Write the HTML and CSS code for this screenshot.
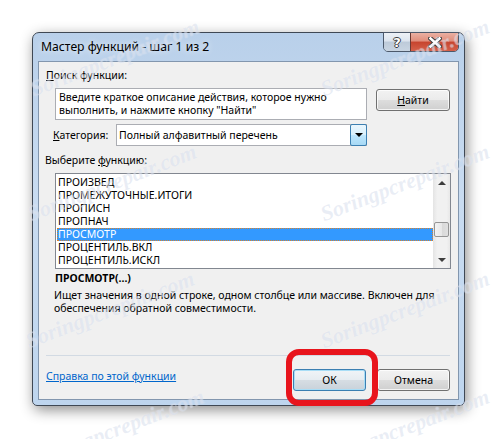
FILE: index.html
```html
<!DOCTYPE html>
<html lang="ru">
<head>
  <meta charset="UTF-8" />
  <title>Мастер функций</title>
  <link rel="stylesheet" href="styles.css">
</head>
<body>

  <div class="window">
    <div class="titlebar">
      <span class="title">Мастер функций - шаг 1 из 2</span>
      <div class="caption-buttons">
        <span class="cap-btn help">?</span>
        <span class="cap-btn close">
          <svg width="14" height="11" viewBox="0 0 14 11">
            <path d="M2.5 1.5 L11.5 9.5 M11.5 1.5 L2.5 9.5" stroke="#3b3b3b" stroke-width="4.6" stroke-linecap="square" fill="none"/>
            <path d="M2.5 1.5 L11.5 9.5 M11.5 1.5 L2.5 9.5" stroke="#fff" stroke-width="2.6" stroke-linecap="square" fill="none"/>
          </svg>
        </span>
      </div>
    </div>

    <div class="client">
      <div class="label"><u>П</u>оиск функции:</div>

      <div class="search-row">
        <div class="search-box">Введите краткое описание действия, которое нужно выполнить, и нажмите кнопку "Найти"</div>
        <button class="btn find"><u>Н</u>айти</button>
      </div>

      <div class="category-row">
        <span class="label"><u>К</u>атегория:</span>
        <div class="combo">
          <span class="combo-text">Полный алфавитный перечень</span>
          <span class="combo-btn"><span class="arrow-down"></span></span>
        </div>
      </div>

      <div class="label pick-label">Выберите <u>ф</u>ункцию:</div>

      <div class="listbox">
        <ul class="items">
          <li>ПРОИЗВЕД</li>
          <li>ПРОМЕЖУТОЧНЫЕ.ИТОГИ</li>
          <li>ПРОПИСН</li>
          <li>ПРОПНАЧ</li>
          <li class="selected">ПРОСМОТР</li>
          <li>ПРОЦЕНТИЛЬ.ВКЛ</li>
          <li>ПРОЦЕНТИЛЬ.ИСКЛ</li>
        </ul>
        <div class="scrollbar">
          <span class="sb-arrow"><span class="tri-up"></span></span>
          <div class="sb-track"><span class="sb-thumb"></span></div>
          <span class="sb-arrow"><span class="tri-down"></span></span>
        </div>
      </div>

      <div class="fn-name">ПРОСМОТР(...)</div>
      <div class="fn-desc">Ищет значения в одной строке, одном столбце или массиве. Включен для обеспечения обратной совместимости.</div>

      <div class="separator"></div>

      <div class="footer">
        <a class="help-link" href="#">Справка по этой функции</a>
        <div class="ok-wrap">
          <button class="btn ok">ОК</button>
          <span class="mark"></span>
        </div>
        <button class="btn">Отмена</button>
      </div>
    </div>
  </div>

  <div class="watermarks">
    <span class="wm" style="left:115px; top:58px">Soringpcrepair.com</span>
    <span class="wm" style="left:405px; top:58px">Soringpcrepair.com</span>
    <span class="wm" style="left:112px; top:183px">Soringpcrepair.com</span>
    <span class="wm" style="left:405px; top:183px">Soringpcrepair.com</span>
    <span class="wm" style="left:110px; top:310px">Soringpcrepair.com</span>
    <span class="wm" style="left:405px; top:310px">Soringpcrepair.com</span>
    <span class="wm" style="left:120px; top:428px">Soringpcrepair.com</span>
    <span class="wm" style="left:405px; top:428px">Soringpcrepair.com</span>
  </div>

</body>
</html>
```

FILE: styles.css
```css
body {
  margin: 0;
  padding: 32px 0 0 32px;
  background: #fff;
  font-family: "Noto Sans", "Open Sans", sans-serif;
  font-size: 10.5px;
  color: #000;
  position: relative;
  height: 439px;
  box-sizing: border-box;
  overflow: hidden;
}

/* window frame */

.window {
  width: 433px;
  height: 374px;
  box-sizing: border-box;
  border: 1px solid #3f4854;
  border-radius: 7px 7px 5px 5px;
  background: linear-gradient(#b9d0ea, #c9dcf1 45%, #bed5ee);
  box-shadow: 2px 4px 14px rgba(0, 0, 0, 0.45);
  display: flex;
  flex-direction: column;
}

.titlebar {
  height: 28px;
  flex: none;
  display: flex;
  justify-content: space-between;
  align-items: flex-start;
  padding: 0 5px 0 8px;
}

.title {
  line-height: 28px;
  font-size: 12.2px;
  text-shadow: 0 0 6px rgba(255, 255, 255, 0.9);
}

.caption-buttons {
  display: flex;
  margin-top: -1px;
  height: 20px;
  box-sizing: border-box;
  border: 1px solid #4c596b;
  border-radius: 0 0 5px 5px;
  overflow: hidden;
}

.cap-btn {
  display: flex;
  align-items: center;
  justify-content: center;
}

.help {
  width: 26px;
  background: linear-gradient(#edf1f6, #dce4ee 45%, #bdcad9 50%, #c9d5e2);
  color: #fff;
  font-family: "DejaVu Sans", sans-serif;
  font-weight: bold;
  font-size: 13px;
  text-shadow: -1px 0 #3b3b3b, 1px 0 #3b3b3b, 0 -1px #3b3b3b, 0 1px #3b3b3b;
}

.close {
  width: 47px;
  border-left: 1px solid #6b3a33;
  background: linear-gradient(#eab0a2, #e08d7b 45%, #c7442e 50%, #d4614a);
}

/* client area */

.client {
  flex: 1;
  margin: 0 5px 5px;
  border: 1px solid #8296ae;
  background: #f0f0f0;
  padding: 6px 8px 0 7px;
  display: flex;
  flex-direction: column;
}

.label {
  line-height: 15px;
}

.search-row {
  display: flex;
  align-items: flex-start;
  margin: 5px 0 0 9px;
}

.search-box {
  width: 312px;
  height: 32px;
  box-sizing: border-box;
  border: 1px solid #abadb3;
  background: #fff;
  padding: 2px 3px 0;
  line-height: 13px;
}

.btn {
  font-family: inherit;
  font-size: 10.5px;
  color: #000;
  height: 22px;
  width: 73px;
  padding: 0;
  border: 1px solid #707070;
  border-radius: 3px;
  background: linear-gradient(#f2f2f2, #ebebeb 48%, #dddddd 52%, #cfcfcf);
  box-shadow: inset 0 0 0 1px rgba(255, 255, 255, 0.75);
}

.find {
  width: 74px;
  margin: 1px 0 0 9px;
}

.category-row {
  display: flex;
  align-items: center;
  width: 314px;
  margin: 4px 0 0 7px;
}

.combo {
  margin-left: auto;
  width: 251px;
  height: 22px;
  box-sizing: border-box;
  border: 1px solid #abadb3;
  background: #fff;
  display: flex;
  align-items: center;
}

.combo-text {
  flex: 1;
  padding-left: 2px;
}

.combo-btn {
  width: 17px;
  height: 22px;
  margin: -1px -1px -1px 0;
  box-sizing: border-box;
  border: 1px solid #3c7fb1;
  border-radius: 2px;
  background: linear-gradient(#eaf6fd, #d9f0fc 48%, #bee6fd 52%, #a7d9f5);
  display: flex;
  align-items: center;
  justify-content: center;
}

.arrow-down {
  border-left: 4px solid transparent;
  border-right: 4px solid transparent;
  border-top: 4px solid #000;
}

.pick-label {
  margin: 7px 0 0 -1px;
}

/* function list */

.listbox {
  display: flex;
  width: 396px;
  height: 96px;
  box-sizing: border-box;
  margin: 5px 0 0 9px;
  border: 1px solid #828790;
  background: #fff;
}

.items {
  flex: 1;
  list-style: none;
  margin: 0;
  padding: 2px 0 0 1px;
  overflow: hidden;
}

.items li {
  line-height: 13px;
  padding-left: 1px;
}

.items li.selected {
  background: #3399ff;
  color: #fff;
  outline: 1px dotted #d9822b;
  outline-offset: -1px;
}

.scrollbar {
  width: 17px;
  display: flex;
  flex-direction: column;
  background: linear-gradient(90deg, #e4e4e4, #f1f1f1 25%, #f1f1f1 80%, #e8e8e8);
}

.sb-arrow {
  height: 17px;
  display: flex;
  align-items: center;
  justify-content: center;
}

.tri-up {
  border-left: 4px solid transparent;
  border-right: 4px solid transparent;
  border-bottom: 4px solid #3d3d3d;
}

.tri-down {
  border-left: 4px solid transparent;
  border-right: 4px solid transparent;
  border-top: 4px solid #3d3d3d;
}

.sb-track {
  flex: 1;
}

.sb-thumb {
  display: block;
  height: 15px;
  margin: 31px 1px 0;
  box-sizing: border-box;
  border: 1px solid #959595;
  border-radius: 2px;
  background: linear-gradient(90deg, #f3f3f3, #e8e8e8 50%, #d9d9d9 55%, #e0e0e0);
}

/* description */

.fn-name {
  font-weight: bold;
  line-height: 15px;
  margin: 2px 0 0 9px;
}

.fn-desc {
  line-height: 13px;
  margin: 3px 0 0 8px;
}

.separator {
  height: 1px;
  background: #d2dae3;
  margin-top: 40px;
}

.footer {
  display: flex;
  align-items: flex-start;
  margin-top: 13px;
}

.help-link {
  line-height: 15px;
  color: #0066cc;
  margin-right: auto;
}

.ok-wrap {
  position: relative;
  margin-right: 11px;
}

.ok {
  display: block;
  border-color: #3c7fb1;
  background: linear-gradient(#f0f4f7, #e6ecf1 48%, #d6dde3 52%, #c9d2da);
  box-shadow: inset 0 0 0 1px #a8ddf6;
}

.mark {
  position: absolute;
  left: -7px;
  top: -20px;
  right: -12px;
  bottom: -15px;
  border: 6px solid #e8141c;
  border-radius: 13px;
}

/* site watermark */

.watermarks {
  position: absolute;
  inset: 0;
  overflow: hidden;
  pointer-events: none;
}

.wm {
  position: absolute;
  transform: translate(-50%, -50%) rotate(-21deg);
  font-family: "Liberation Serif", serif;
  font-style: italic;
  font-weight: bold;
  font-size: 22px;
  white-space: nowrap;
  color: rgba(170, 186, 216, 0.25);
  text-shadow: 0 0 1px rgba(255, 255, 255, 0.5);
}
```
